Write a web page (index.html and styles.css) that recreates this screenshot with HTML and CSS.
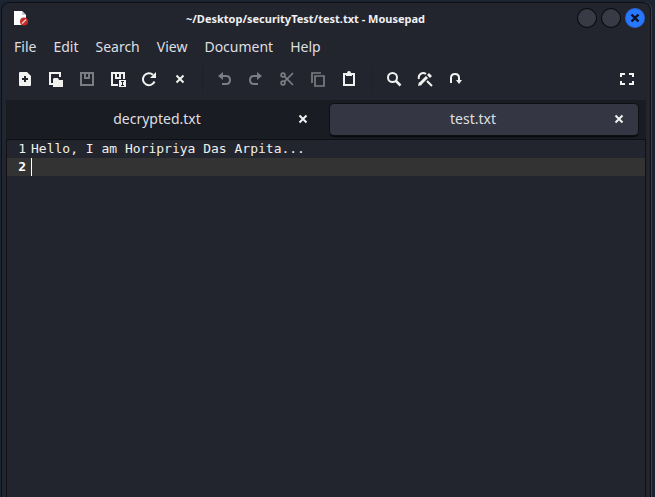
FILE: index.html
```html
<!DOCTYPE html>
<html lang="en">
<head>
<meta charset="utf-8">
<title>~/Desktop/securityTest/test.txt - Mousepad</title>
<link rel="stylesheet" href="styles.css">
</head>
<body>
<main class="window">
  <header class="titlebar">
    <svg class="app-icon" viewBox="0 0 16 16" width="16" height="16" aria-hidden="true">
      <path d="M1 1h8l4 4v10H1z" fill="#fff"/><path d="M9 1l4 4H9z" fill="#c9cace"/>
      <circle cx="11" cy="11.5" r="4" fill="#c52a2a"/><path d="M9 13.5l4-4" stroke="#f2caca" stroke-width="1.4"/>
    </svg>
    <h1 class="title">~/Desktop/securityTest/test.txt - Mousepad</h1>
    <div class="controls">
      <button class="control" aria-label="Minimize"></button>
      <button class="control" aria-label="Maximize"></button>
      <button class="control control-close" aria-label="Close">
        <svg viewBox="0 0 18 18" width="18" height="18"><path d="M5.5 5.5l7 7m0-7l-7 7" stroke="#0c1020" stroke-width="2.4"/></svg>
      </button>
    </div>
  </header>
  <nav class="menubar">
    <button class="menu">File</button>
    <button class="menu">Edit</button>
    <button class="menu">Search</button>
    <button class="menu">View</button>
    <button class="menu">Document</button>
    <button class="menu">Help</button>
  </nav>
  <div class="toolbar" role="toolbar">
    <button class="tool" aria-label="New"><svg viewBox="0 0 16 16"><path fill="currentColor" fill-rule="evenodd" d="M3 1h7l4 4v9q0 1-1 1H3q-1 0-1-1V2q0-1 1-1zM7 5v2H5v2h2v2h2V9h2V7H9V5z"/></svg></button>
    <button class="tool" aria-label="Open"><svg viewBox="0 0 16 16"><path fill="none" stroke="currentColor" stroke-width="2" d="M5 13H2V2h10v4"/><path fill="currentColor" d="M6 7h4l1 2h4v7H5V8z"/></svg></button>
    <button class="tool" aria-label="Save" disabled><svg viewBox="0 0 16 16"><path fill="currentColor" fill-rule="evenodd" d="M1 1h14v14H1zM3 3v10h10V3h-2v5H5V3zM7 3v3h2V3z"/></svg></button>
    <button class="tool" aria-label="Save as"><svg viewBox="0 0 16 16"><path fill="currentColor" fill-rule="evenodd" d="M1 1h14v7h-2V3h-2v5H5V3H3v10h5v2H1zM7 3v3h2V3z"/><path fill="currentColor" fill-rule="evenodd" d="M9 9h7v7H9zM11 10v1h1v3h-1v1h3v-1h-1v-3h1v-1z"/></svg></button>
    <button class="tool" aria-label="Reload"><svg viewBox="0 0 16 16"><path fill="none" stroke="currentColor" stroke-width="2" d="M13.5 10.5A6 6 0 1 1 12 3.800"/><path fill="currentColor" d="M15 1v6H9z"/></svg></button>
    <button class="tool" aria-label="Close file"><svg viewBox="0 0 16 16"><path stroke="currentColor" stroke-width="2" d="M4.500 4.500l7 7m0-7l-7 7"/></svg></button>
    <span class="separator"></span>
    <button class="tool" aria-label="Undo" disabled><svg viewBox="0 0 16 16"><path fill="none" stroke="currentColor" stroke-width="2" d="M4 5h5q4 0 4 4t-4 4H5"/><path fill="currentColor" d="M1 5l5-4v8z"/></svg></button>
    <button class="tool" aria-label="Redo" disabled><svg viewBox="0 0 16 16"><path fill="none" stroke="currentColor" stroke-width="2" d="M11 5H6Q2 5 2 9t4 4h4"/><path fill="currentColor" d="M14 5L9 1v8z"/></svg></button>
    <button class="tool" aria-label="Cut" disabled><svg viewBox="0 0 16 16"><g fill="none" stroke="currentColor" stroke-width="1.700"><circle cx="4" cy="4" r="1.900"/><circle cx="4" cy="12" r="1.900"/><path d="M5.400 5.400l8.600 8.600M5.400 10.600L14 2"/></g></svg></button>
    <button class="tool" aria-label="Copy" disabled><svg viewBox="0 0 16 16"><path fill="none" stroke="currentColor" stroke-width="1.700" d="M2 12V2h9M5 5h9v10H5z"/></svg></button>
    <button class="tool" aria-label="Paste"><svg viewBox="0 0 16 16"><path fill="none" stroke="currentColor" stroke-width="2" d="M3 3h10v11H3z"/><path fill="currentColor" fill-rule="evenodd" d="M5 5V2h1q0-2 2-2t2 2h1v3zM7 2v1h2V2z"/></svg></button>
    <span class="separator"></span>
    <button class="tool" aria-label="Find"><svg viewBox="0 0 16 16"><circle cx="6.500" cy="6.500" r="4.500" fill="none" stroke="currentColor" stroke-width="2"/><path stroke="currentColor" stroke-width="2.500" d="M9.500 9.500l5 5"/></svg></button>
    <button class="tool" aria-label="Find and replace"><svg viewBox="0 0 16 16"><path fill="none" stroke="currentColor" stroke-width="2" d="M2 8a4.500 4.500 0 0 1 7-5M10 10l5 5"/><path stroke="currentColor" stroke-width="3" d="M3 13l7-7"/><path fill="currentColor" d="M1 15l1-4 3 3zM10 4l2-2 3 3-2 2z"/></svg></button>
    <button class="tool" aria-label="Go to"><svg viewBox="0 0 16 16"><path fill="none" stroke="currentColor" stroke-width="2" d="M3 12V7q0-4 4-4t4 4v4"/><path fill="currentColor" d="M8 9h6l-3 4z"/></svg></button>
    <button class="tool tool-last" aria-label="Fullscreen"><svg viewBox="0 0 16 16"><path fill="none" stroke="currentColor" stroke-width="2" d="M6 3H2v3m8-3h4v3M6 13H2v-3m8 3h4v-3"/></svg></button>
  </div>
  <section class="notebook">
    <div class="tabs">
      <div class="tab">
        <button class="tab-label">decrypted.txt</button>
        <button class="tab-close" aria-label="Close decrypted.txt"><svg viewBox="0 0 10 10"><path stroke="currentColor" stroke-width="2" d="M1.500 1.500l7 7m0-7l-7 7"/></svg></button>
      </div>
      <div class="tab tab-active">
        <button class="tab-label">test.txt</button>
        <button class="tab-close" aria-label="Close test.txt"><svg viewBox="0 0 10 10"><path stroke="currentColor" stroke-width="2" d="M1.500 1.500l7 7m0-7l-7 7"/></svg></button>
      </div>
    </div>
    <div class="editor">
      <div class="line"><span class="number">1</span><code class="code">Hello, I am Horipriya Das Arpita...</code></div>
      <div class="line line-current"><span class="number">2</span><code class="code code-cursor"></code></div>
    </div>
  </section>
</main>
</body>
</html>
```
FILE: styles.css
```css
* { box-sizing: border-box; }

body {
  margin: 0;
  min-height: 100vh;
  display: flex;
  padding: 2px 4px 0 1px;
  background: #1b2430;
  color: #dedfe1;
  font-family: "Noto Sans", sans-serif;
  font-size: 14px;
}

button {
  margin: 0;
  padding: 0;
  border: 0;
  background: none;
  color: inherit;
  font: inherit;
}

svg { display: block; }

.window {
  flex: 1;
  display: flex;
  flex-direction: column;
  padding: 0 4px;
  background: #23252e;
  border: 1px solid #0e1015;
  border-bottom: 0;
  border-radius: 8px 8px 0 0;
  box-shadow: 1px 0 #39434f;
}

.titlebar {
  display: grid;
  grid-template-columns: 26px 1fr 72px;
  align-items: center;
  height: 30px;
  padding: 0 2px 0 7px;
}

.title {
  margin: 0;
  text-align: center;
  font-size: 11px;
  font-weight: 700;
  color: #f0f0f2;
}

.controls {
  display: flex;
  justify-content: flex-end;
  gap: 6px;
}

.control {
  width: 18px;
  height: 18px;
  border-radius: 50%;
  background: #383b46;
  box-shadow: 0 0 0 1px #08090c;
}

.control-close {
  background: #2777ff;
  box-shadow: 0 0 0 1px #2868d8;
}

.menubar {
  display: flex;
  gap: 17px;
  height: 26px;
  padding: 0 8px;
}

.toolbar {
  display: flex;
  align-items: center;
  gap: 15px;
  height: 39px;
  padding: 0 11px;
  margin-bottom: 2px;
  color: #f1f1ef;
}

.tool svg { width: 16px; height: 16px; }
.tool:disabled { color: #7b7d84; }
.tool-last { margin-left: auto; }

.separator {
  width: 1px;
  height: 28px;
  margin: 0 -1px;
  background: #1f2129;
}

.notebook {
  flex: 1;
  display: flex;
  flex-direction: column;
}

.tabs {
  display: grid;
  grid-template-columns: 1fr 1fr;
  gap: 8px;
  padding: 4px 8px;
  background: #1a1c23;
}

.tab {
  display: flex;
  align-items: center;
  height: 31px;
  padding: 0 14px 2px 2px;
  border-radius: 4px;
}

.tab-active {
  background: #343743;
  box-shadow: 0 0 0 1px #0e1014, 0 2px 1px #08090c;
}

.tab-label { flex: 1; }
.tab-close svg { width: 10px; height: 10px; color: #f1f1ef; }

.editor {
  flex: 1;
  border: 1px solid #0e1015;
  border-bottom: 0;
  font-family: "DejaVu Sans Mono", monospace;
  font-size: 13px;
  line-height: 18px;
  color: #f0f0e8;
}

.line { display: flex; height: 18px; }
.line-current { background: #333; }
.line-current .number { color: #fff; font-weight: 700; }

.number {
  width: 24px;
  padding-right: 5px;
  text-align: right;
}

.code { font: inherit; }
.code-cursor { border-left: 1px solid #fff; }
```
